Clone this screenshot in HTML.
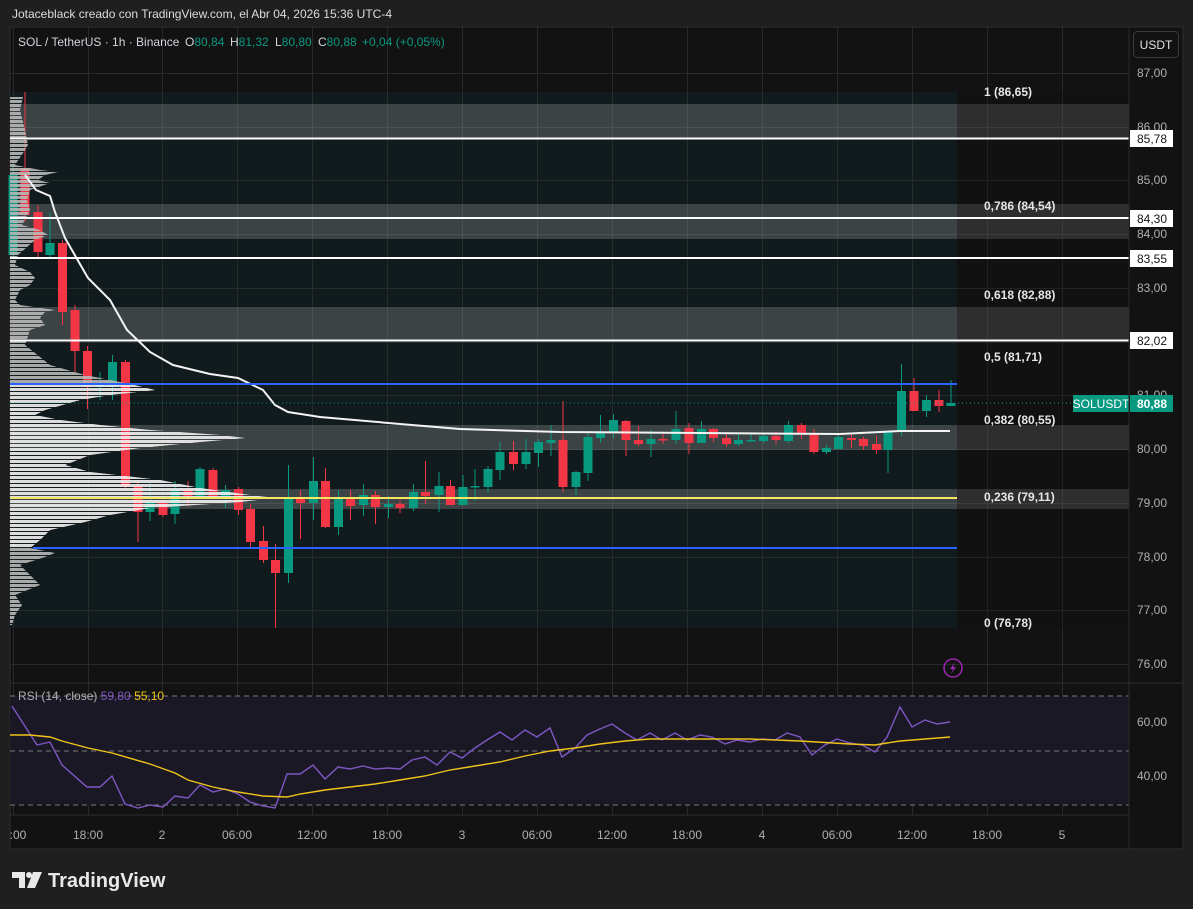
<!DOCTYPE html>
<html><head><meta charset="utf-8"><style>
html,body{margin:0;padding:0;background:#202020;}
body{width:1193px;height:909px;overflow:hidden;position:relative;font-family:"Liberation Sans",sans-serif;}
svg{position:absolute;left:0;top:0;}
</style></head><body>
<svg id="s" width="1193" height="909" viewBox="0 0 1193 909" font-family="Liberation Sans, sans-serif">
<defs>
<pattern id="pg" x="0" y="0" width="10" height="4" patternUnits="userSpaceOnUse"><rect x="0" y="0" width="10" height="3" fill="#b8b8b8"/></pattern>
<pattern id="pw" x="0" y="0" width="10" height="4" patternUnits="userSpaceOnUse"><rect x="0" y="0" width="10" height="3" fill="#f2f2f2"/></pattern>
<clipPath id="va"><rect x="0" y="384" width="400" height="164"/></clipPath>
</defs>
<rect x="0" y="0" width="1193" height="909" fill="#1f1f1f"/>
<text x="12" y="18" font-size="12" fill="#dcdcdc">Jotaceblack creado con TradingView.com, el Abr 04, 2026 15:36 UTC-4</text>
<rect x="10" y="27" width="1173" height="822" fill="#121212" stroke="#2e2e2e" stroke-width="1"/>
<rect x="10" y="92" width="947" height="536" fill="#111a1c"/>
<g id="grid" stroke="#262b2c" stroke-width="1"></g>
<g fill="#ffffff" fill-opacity="0.18">
<rect x="10" y="104" width="1119" height="34"/>
<rect x="10" y="204" width="1119" height="35"/>
<rect x="10" y="307" width="1119" height="34"/>
<rect x="10" y="425" width="1119" height="25"/>
<rect x="10" y="489" width="1119" height="20"/>
</g>
<rect x="957" y="92" width="172" height="536" fill="#121212" fill-opacity="0.3"/>
<g id="candles"></g>
<g opacity="0.9">
<polygon fill="url(#pg)" points="10,97 23,97 20,110 25,130 28,145 25,150 15,165 40,170 58,172 45,175 38,180 50,183 30,190 27,200 30,210 22,225 40,230 48,235 35,240 18,255 15,265 30,272 35,278 30,285 20,290 15,300 20,305 55,310 45,312 40,318 45,325 30,330 25,345 50,365 85,375 130,384 155,390 110,395 80,400 45,410 35,415 60,420 100,425 150,430 220,435 245,438 200,442 140,448 90,455 65,465 90,472 160,480 200,488 250,495 275,498 240,502 150,508 110,515 85,522 50,530 40,540 30,548 55,553 45,557 20,565 30,575 40,585 15,595 22,605 15,615 12,625 10,625"/>
<polygon clip-path="url(#va)" fill="url(#pw)" points="10,97 23,97 20,110 25,130 28,145 25,150 15,165 40,170 58,172 45,175 38,180 50,183 30,190 27,200 30,210 22,225 40,230 48,235 35,240 18,255 15,265 30,272 35,278 30,285 20,290 15,300 20,305 55,310 45,312 40,318 45,325 30,330 25,345 50,365 85,375 130,384 155,390 110,395 80,400 45,410 35,415 60,420 100,425 150,430 220,435 245,438 200,442 140,448 90,455 65,465 90,472 160,480 200,488 250,495 275,498 240,502 150,508 110,515 85,522 50,530 40,540 30,548 55,553 45,557 20,565 30,575 40,585 15,595 22,605 15,615 12,625 10,625"/>
</g>
<polyline fill="none" stroke="#f4f4f4" stroke-width="2" points="25,175 36,190 50,196 55,212 65,238 88,278 110,300 127,330 150,352 173,365 210,374 238,378 263,390 275,405 288,412 320,417 400,424 460,429 560,432 700,433 840,434 900,431 950,431"/>
<g stroke="#ffffff" stroke-width="2">
<line x1="10" y1="138.5" x2="1129" y2="138.5"/>
<line x1="10" y1="218" x2="1129" y2="218"/>
<line x1="10" y1="258" x2="1129" y2="258"/>
<line x1="10" y1="340.5" x2="1129" y2="340.5"/>
</g>
<line x1="10" y1="384" x2="957" y2="384" stroke="#2962ff" stroke-width="2"/>
<line x1="33" y1="548" x2="957" y2="548" stroke="#2962ff" stroke-width="2"/>
<line x1="10" y1="498" x2="957" y2="498" stroke="#f5e663" stroke-width="2"/>
<line x1="10" y1="403" x2="1129" y2="403" stroke="#089981" stroke-width="1" stroke-dasharray="1,3"/>
<g font-size="12" font-weight="bold" fill="#e6e6e6">
<text x="984" y="96">1 (86,65)</text>
<text x="984" y="210">0,786 (84,54)</text>
<text x="984" y="299">0,618 (82,88)</text>
<text x="984" y="361">0,5 (81,71)</text>
<text x="984" y="424">0,382 (80,55)</text>
<text x="984" y="501">0,236 (79,11)</text>
<text x="984" y="627">0 (76,78)</text>
</g>
<g font-size="12" fill="#b0b0b0" text-anchor="middle">
<text x="1152" y="77">87,00</text><text x="1152" y="131">86,00</text><text x="1152" y="184">85,00</text>
<text x="1152" y="238">84,00</text><text x="1152" y="292">83,00</text><text x="1152" y="399">81,00</text>
<text x="1152" y="453">80,00</text><text x="1152" y="507">79,00</text><text x="1152" y="561">78,00</text>
<text x="1152" y="614">77,00</text><text x="1152" y="668">76,00</text>
<text x="1152" y="726">60,00</text><text x="1152" y="780">40,00</text>
</g>
<g font-size="12" fill="#131313" text-anchor="middle">
<rect x="1130" y="130" width="43" height="17" fill="#fff"/><text x="1152" y="143">85,78</text>
<rect x="1130" y="210" width="43" height="17" fill="#fff"/><text x="1152" y="223">84,30</text>
<rect x="1130" y="250" width="43" height="17" fill="#fff"/><text x="1152" y="263">83,55</text>
<rect x="1130" y="332" width="43" height="17" fill="#fff"/><text x="1152" y="345">82,02</text>
</g>
<rect x="1073" y="395" width="56" height="17" fill="#089981"/>
<text x="1101" y="408" font-size="12" fill="#fff" text-anchor="middle">SOLUSDT</text>
<rect x="1130" y="395" width="43" height="17" fill="#089981"/>
<text x="1152" y="408" font-size="12" font-weight="bold" fill="#fff" text-anchor="middle">80,88</text>
<rect x="1133.5" y="31.5" width="45" height="26" rx="4" fill="#121212" stroke="#3a3a3a"/>
<text x="1156" y="49" font-size="12" fill="#e0e0e0" text-anchor="middle">USDT</text>
<g font-size="12" fill="#d1d4dc">
<text x="18" y="46">SOL / TetherUS · 1h · Binance</text>
<text x="185" y="46">O<tspan fill="#089981">80,84</tspan></text>
<text x="230" y="46">H<tspan fill="#089981">81,32</tspan></text>
<text x="275" y="46">L<tspan fill="#089981">80,80</tspan></text>
<text x="318" y="46">C<tspan fill="#089981">80,88</tspan></text>
<text x="362" y="46" fill="#089981">+0,04 (+0,05%)</text>
</g>
<circle cx="953" cy="668" r="9" fill="none" stroke="#9c27b0" stroke-width="1.5"/>
<path d="M955 662 L950 669 L953 669 L951 674 L956 667 L953 667 Z" fill="#9c27b0"/>
<line x1="10" y1="683" x2="1183" y2="683" stroke="#2e2e2e"/>
<rect x="10" y="696" width="1119" height="109" fill="#1b1826"/>
<g stroke="#7a7a7a" stroke-dasharray="5,4">
<line x1="10" y1="696" x2="1129" y2="696"/><line x1="10" y1="751" x2="1129" y2="751"/><line x1="10" y1="805" x2="1129" y2="805"/>
</g>
<polyline fill="none" stroke="#7e57c2" stroke-width="1.4" points="12,706 37,745 50,742 62,765 87,787 100,787 112,776 125,804 138,808 150,805 163,807 175,796 188,798 200,785 213,792 225,789 238,794 250,802 263,806 275,808 287,774 300,774 313,765 325,779 338,767 350,769 363,766 375,769 388,768 400,769 412,760 425,757 437,765 450,752 462,758 475,748 487,740 500,732 512,740 525,730 537,737 550,728 562,757 575,748 587,735 600,729 612,724 625,733 637,740 650,733 662,740 675,733 687,740 700,735 712,737 725,744 737,740 750,742 762,739 775,740 787,733 800,737 812,755 825,745 837,739 850,743 862,745 875,752 887,737 900,707 912,727 925,720 937,724 950,722"/>
<polyline fill="none" stroke="#f0c419" stroke-width="1.4" points="10,735 30,735 50,737 62,741 88,748 112,753 150,764 175,773 188,780 213,787 238,792 263,796 287,797 300,794 325,790 350,787 375,784 400,780 425,776 450,770 475,766 500,762 525,756 550,751 575,748 600,744 625,741 650,739 700,739 750,739 800,741 850,744 875,745 887,743 900,741 925,739 950,737"/>
<text x="18" y="700" font-size="12" fill="#b0b0b0">RSI (14, close) <tspan fill="#7e57c2">59,80</tspan> <tspan fill="#f0c419">55,10</tspan></text>
<line x1="10" y1="815" x2="1129" y2="815" stroke="#2e2e2e"/>
<line x1="1129" y1="27" x2="1129" y2="849" stroke="#2a2a2a"/>
<g font-size="12" fill="#b0b0b0" text-anchor="middle">
<text x="18" y="839">:00</text><text x="88" y="839">18:00</text><text x="162" y="839">2</text>
<text x="237" y="839">06:00</text><text x="312" y="839">12:00</text><text x="387" y="839">18:00</text>
<text x="462" y="839">3</text><text x="537" y="839">06:00</text><text x="612" y="839">12:00</text>
<text x="687" y="839">18:00</text><text x="762" y="839">4</text><text x="837" y="839">06:00</text>
<text x="912" y="839">12:00</text><text x="987" y="839">18:00</text><text x="1062" y="839">5</text>
</g>
<g fill="#e8e8e8">
<path d="M12 872 H25 V888 H19 V878 H12 Z"/>
<circle cx="29" cy="875" r="3"/>
<path d="M33 872 H42 L35 888 H27 Z"/>
</g>
<text x="48" y="887" font-size="20" font-weight="bold" fill="#e8e8e8">TradingView</text>
</svg>
<script>
var ns="http://www.w3.org/2000/svg";
var g=document.getElementById('grid');
function ln(x1,y1,x2,y2){var l=document.createElementNS(ns,'line');l.setAttribute('x1',x1);l.setAttribute('y1',y1);l.setAttribute('x2',x2);l.setAttribute('y2',y2);g.appendChild(l);}
[73,127,180,234,288,342,395,449,503,557,610,664].forEach(function(y){ln(10,y+.5,1129,y+.5);});
[722,776].forEach(function(y){ln(10,y+.5,1129,y+.5);});
[13,88,162,237,312,387,462,537,612,687,762,837,912,987,1062].forEach(function(x){ln(x+.5,27,x+.5,815);});
var C=[[13,175,255,165,258,'g'],[25,168,215,92,222,'r'],[38,212,252,205,258,'r'],[50,243,255,212,258,'g'],[62.5,243,312,240,325,'r'],[75,310,351,305,372,'r'],[87.5,351,387,346,409,'r'],[100,383,387,372,400,'g'],[112.5,362,387,355,400,'g'],[125.5,362,487,360,490,'r'],[138,486,512,480,542,'r'],[150,503,512,482,521,'g'],[163,503,515,500,517,'r'],[175,490,514,481,524,'g'],[188,490,496,481,507,'r'],[200,469,496,467,498,'g'],[213,470,496,468,498,'r'],[225.5,490,496,485,508,'g'],[238.5,489,510,487,515,'r'],[250.5,509,542,504,547,'r'],[263.5,541,560,526,563,'r'],[275.5,560,573,544,628,'r'],[288.5,499,573,465,583,'g'],[300.5,499,503,490,539,'r'],[313.5,481,503,457,520,'g'],[325.5,481,527,468,528,'r'],[338.5,497,527,490,535,'g'],[350.5,497,506,490,520,'r'],[363.5,495,505,484,516,'g'],[375.5,495,507,491,524,'r'],[388.5,504,507,496,518,'g'],[400,504,508,500,513,'r'],[413.5,492,508,484,511,'g'],[425.5,492,496,461,504,'r'],[439,486,495,472,512,'g'],[450.5,486,505,480,505,'r'],[463,487,505,475,505,'g'],[475,486,487,469,501,'g'],[488,469,487,466,493,'g'],[500,452,470,442,480,'g'],[513.5,452,464,441,470,'r'],[526,452,464,439,469,'g'],[538.5,442,453,439,467,'g'],[551,440,443,425,456,'g'],[563,440,487,401,492,'r'],[576,472,487,471,495,'g'],[588,437,473,433,481,'g'],[600.5,432,438,415,443,'g'],[613.5,420,433,414,438,'g'],[626,421,440,420,456,'r'],[638.5,440,444,426,446,'r'],[651,439,444,430,457,'g'],[663,439,440,434,444,'r'],[676,429,440,411,444,'g'],[689,428,443,423,454,'r'],[701.5,429,443,421,443,'g'],[713.5,429,438,428,442,'r'],[726.5,438,444,434,447,'r'],[738.5,440,444,433,446,'g'],[751,440,441,434,442,'g'],[763.5,436,441,433,443,'g'],[776,436,440,432,444,'r'],[788.5,425,441,421,443,'g'],[801.5,425,433,423,439,'r'],[814,433,452,429,454,'r'],[826.5,448,452,445,454,'g'],[838.5,437,449,434,449,'g'],[851.5,438,440,434,448,'r'],[863.5,439,446,437,450,'r'],[876.5,444,450,436,454,'r'],[888,431,450,430,473,'g'],[901.5,391,431,364,436,'g'],[914,391,411,378,411,'r'],[926.5,400,411,395,417,'g'],[939,400,406,390,412,'r'],[951,403,406,380,406,'g']];
var cg=document.getElementById('candles');
C.forEach(function(c){var col=c[5]=='g'?'#089981':'#f23645';
var w=document.createElementNS(ns,'rect');w.setAttribute('x',c[0]-0.5);w.setAttribute('y',c[3]);w.setAttribute('width',1);w.setAttribute('height',c[4]-c[3]);w.setAttribute('fill',col);cg.appendChild(w);
var b=document.createElementNS(ns,'rect');b.setAttribute('x',c[0]-4.5);b.setAttribute('y',c[1]);b.setAttribute('width',9);b.setAttribute('height',Math.max(1.5,c[2]-c[1]));b.setAttribute('fill',col);cg.appendChild(b);});
</script>
</body></html>
